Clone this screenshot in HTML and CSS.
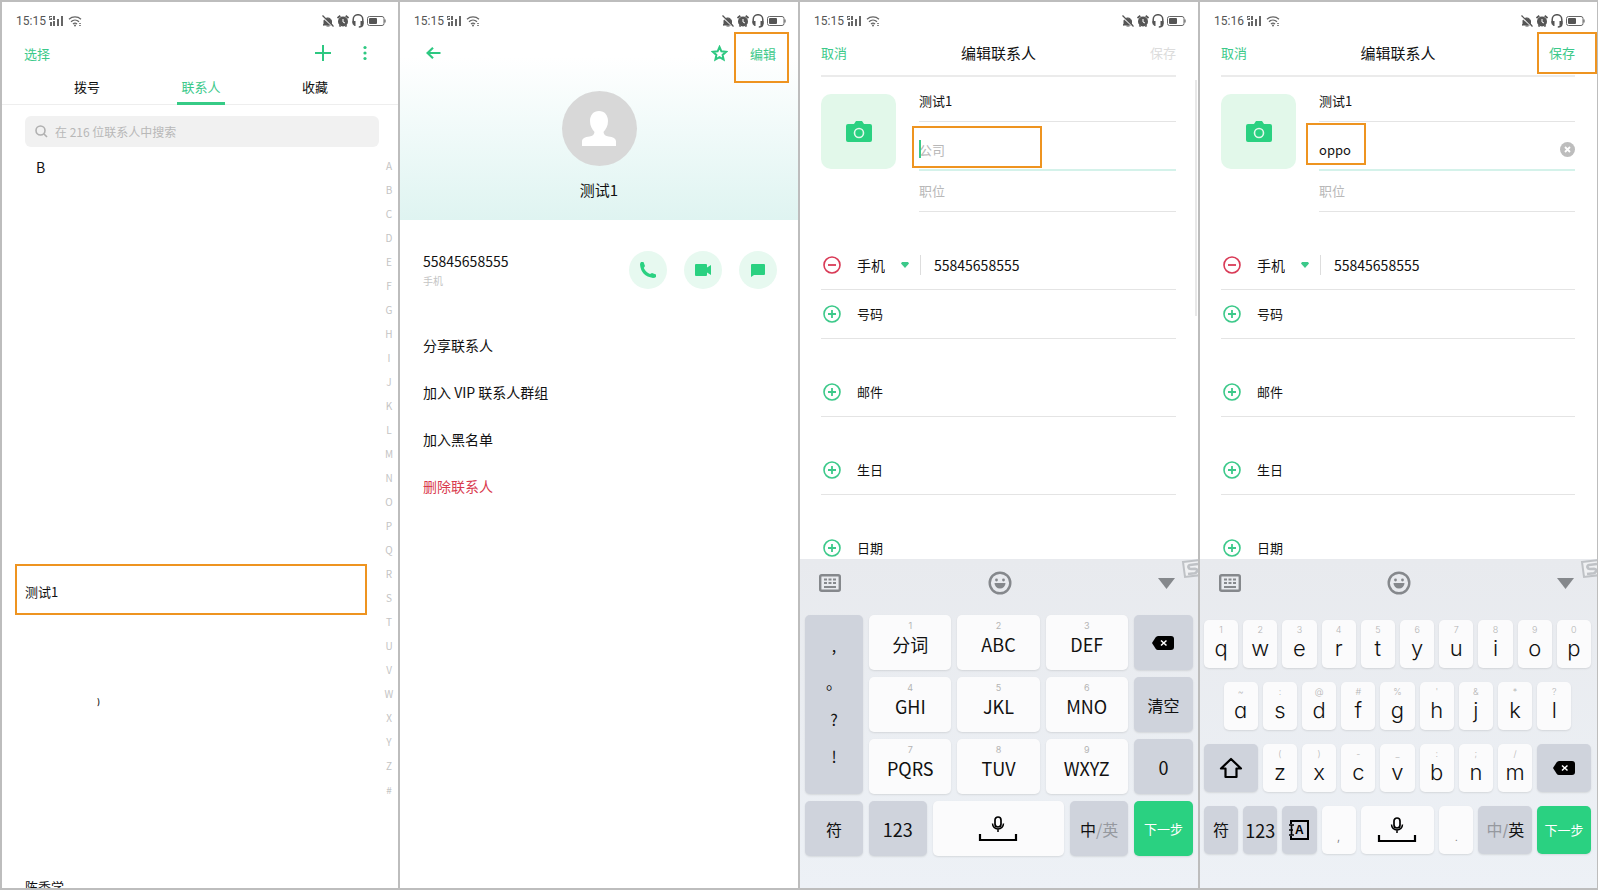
FILE: index.html
```html
<!DOCTYPE html>
<html lang="zh-CN">
  <head>
    <meta charset="UTF-8">
    <meta name="viewport" content="width=device-width, initial-scale=1.0">
    <title>编辑联系人</title>
    <link rel="stylesheet" href="styles.css">
  </head>
  <body>
    <!-- icons -->
    <svg class="sprite" aria-hidden="true">
      <symbol id="signal" viewBox="0 0 14 12">
        <path d="M0 1h3v1H1v1h2v2H0V4h2V3.500H0zM4 1h2v4H4zM1 7h2v4H1zM4 6h2v5H4zM8 4h2v7H8zM12 1h2v10h-2z" fill="#666"/>
      </symbol>
      <symbol id="wifi" viewBox="0 0 14 12">
        <path d="M1 4.200a9 9 0 0 1 12 0M3 6.700a6 6 0 0 1 8 0M5 9a3 3 0 0 1 4 0" fill="none" stroke="#666" stroke-width="1.300"/>
        <circle cx="7" cy="10.500" r="1" fill="#666"/><path d="M11 8h2v1h-2zM11 10h2v1h-2z" fill="#888"/>
      </symbol>
      <symbol id="bell" viewBox="0 0 12 12">
        <path d="M2 9.500V5.500a4 4 0 0 1 7.500 0v4l1 .500H1zM4.500 11h3" fill="#555" stroke="#555"/>
        <path d="M0 1.500l11 10" stroke="#fff" stroke-width="1.600"/><path d="M.500 .500l11 11" stroke="#555" stroke-width="1.200"/>
      </symbol>
      <symbol id="alarm" viewBox="0 0 12 12">
        <circle cx="6" cy="6.500" r="5" fill="#555"/>
        <path d="M.500 3l2.800-2.300M11.500 3L8.700.700M2.500 11.500l1-1.200M9.500 11.500l-1-1.200" stroke="#555" stroke-width="1.800"/>
        <path d="M6 4v3l2 1" fill="none" stroke="#fff" stroke-width="1"/>
      </symbol>
      <symbol id="headset" viewBox="0 0 12 14">
        <path d="M1.200 9V5.500a4.800 4.800 0 0 1 9.600 0v4.500q0 3-4 3" fill="none" stroke="#555" stroke-width="1.500"/>
        <path d="M.500 7h3v5H2.500L.500 10zM11.500 7h-3v5h1l2-2z" fill="#555"/>
      </symbol>
      <symbol id="battery" viewBox="0 0 19 10">
        <rect x=".500" y=".500" width="16.500" height="9" rx="2" fill="none" stroke="#666"/>
        <rect x="2" y="2" width="8" height="6" rx="1" fill="#555"/><path d="M18 3.500v3" stroke="#666" stroke-width="1.200"/>
      </symbol>
      <symbol id="camera" viewBox="0 0 26 22">
        <path d="M2 3h6l2-3h6l2 3h6q2 0 2 2v14q0 2-2 2H2q-2 0-2-2V5q0-2 2-2z" fill="#2ad181"/>
        <circle cx="13" cy="12" r="4.500" fill="none" stroke="#e2f8ea" stroke-width="1.600"/>
      </symbol>
      <symbol id="plus-circle" viewBox="0 0 18 18">
        <circle cx="9" cy="9" r="8" fill="none" stroke="#3cc98a" stroke-width="1.600"/>
        <path d="M5 9h8M9 5v8" stroke="#3cc98a" stroke-width="1.800"/>
      </symbol>
      <symbol id="minus-circle" viewBox="0 0 18 18">
        <circle cx="9" cy="9" r="8" fill="none" stroke="#d93a56" stroke-width="1.600"/>
        <path d="M5 9h8" stroke="#d93a56" stroke-width="1.800"/>
      </symbol>
      <symbol id="keyboard" viewBox="0 0 22 18">
        <rect x="1.200" y="1.200" width="19.600" height="15.600" rx="1.500" fill="none" stroke="#85888c" stroke-width="2.400"/>
        <path d="M5 4.500h3v2H5zM9.500 4.500h3v2h-3zM14 4.500h3v2h-3zM5 8h3v2H5zM9.500 8h3v2h-3zM14 8h3v2h-3zM5 12h12v2H5z" fill="#85888c"/>
      </symbol>
      <symbol id="smile" viewBox="0 0 24 24">
        <circle cx="12" cy="12" r="10.300" fill="none" stroke="#85888c" stroke-width="2.400"/>
        <circle cx="8.500" cy="9" r="1.400" fill="#85888c"/><circle cx="15.500" cy="9" r="1.400" fill="#85888c"/>
        <path d="M6.500 12h11a5.500 5.500 0 0 1-11 0z" fill="#85888c"/>
      </symbol>
      <symbol id="backspace" viewBox="0 0 22 14">
        <path d="M6 0h13q3 0 3 3v8q0 3-3 3H6q-1.500 0-2.500-1.500L0 7l3.500-5.500Q4.500 0 6 0z" fill="#000"/>
        <path d="M9 4.500l5.500 5M14.500 4.500l-5.500 5" stroke="#fff" stroke-width="1.500"/>
      </symbol>
      <symbol id="mic-space" viewBox="0 0 40 26">
        <rect x="17" y="1" width="6" height="10" rx="3" fill="none" stroke="#000" stroke-width="1.700"/>
        <path d="M14.500 7.500a5.500 5.500 0 0 0 11 0M20 13v3" fill="none" stroke="#000" stroke-width="1.500"/>
        <path d="M2 18v6h36v-6" fill="none" stroke="#000" stroke-width="2.200"/>
      </symbol>
      <symbol id="shift" viewBox="0 0 24 22">
        <path d="M12 2L2 11.500h4.500V20h11v-8.500H22z" fill="none" stroke="#000" stroke-width="2.200" stroke-linejoin="round"/>
      </symbol>
      <symbol id="sogou" viewBox="0 0 20 20">
        <path d="M2 3L20 1v15L4 18z" fill="#f0f1f3" stroke="#bfc2c6" stroke-width="2"/>
        <path d="M17 5L9 6q-2 .500-1.500 2.500Q8 10 10 10l4-.300q2.500.300 2 2.300-.300 2-2.500 2.300L7 15" fill="none" stroke="#bfc2c6" stroke-width="2.600"/>
      </symbol>
    </svg>

    <main class="phones">
      <!-- contact list -->
      <section class="phone">
        <div class="status">
          <span>15:15</span>
          <svg class="i-14"><use href="#signal"/></svg>
          <svg class="i-14"><use href="#wifi"/></svg>
          <svg class="i-12 push"><use href="#bell"/></svg>
          <svg class="i-12"><use href="#alarm"/></svg>
          <svg class="i-head"><use href="#headset"/></svg>
          <svg class="i-bat"><use href="#battery"/></svg>
        </div>
        <header class="bar">
          <button class="link">选择</button>
          <button class="icon-button push" aria-label="新建">
            <svg width="16" height="16" viewBox="0 0 16 16"><path d="M0 8h16M8 0v16" stroke="#2dc881" stroke-width="2"/></svg>
          </button>
          <button class="icon-button more" aria-label="更多">
            <svg width="4" height="16" viewBox="0 0 4 16" fill="#2dc881"><circle cx="2" cy="2.500" r="1.600"/><circle cx="2" cy="8" r="1.600"/><circle cx="2" cy="13.500" r="1.600"/></svg>
          </button>
        </header>
        <nav class="tabs">
          <a href="#dial">拨号</a>
          <a href="#contacts" class="active"><span>联系人</span></a>
          <a href="#favorites">收藏</a>
        </nav>
        <label class="search">
          <svg width="13" height="13" viewBox="0 0 13 13" fill="none" stroke="#b0b0b0" stroke-width="1.600"><circle cx="5.500" cy="5.500" r="4.500"/><path d="M9 9l3 3"/></svg>
          <input type="search" placeholder="在 216 位联系人中搜索" aria-label="搜索联系人">
        </label>
        <div class="contacts">
          <div class="contact-list">
            <h3>B</h3>
            <button class="contact marked">测试1</button>
            <p class="contact-rest">)</p>
            <p class="contact-last">陈秀学</p>
          </div>
          <ul class="index">
            <li>A</li><li>B</li><li>C</li><li>D</li><li>E</li><li>F</li><li>G</li><li>H</li><li>I</li>
            <li>J</li><li>K</li><li>L</li><li>M</li><li>N</li><li>O</li><li>P</li><li>Q</li><li>R</li>
            <li>S</li><li>T</li><li>U</li><li>V</li><li>W</li><li>X</li><li>Y</li><li>Z</li><li>#</li>
          </ul>
        </div>
      </section>

      <!-- contact details -->
      <section class="phone">
        <div class="profile">
          <div class="status">
            <span>15:15</span>
            <svg class="i-14"><use href="#signal"/></svg>
            <svg class="i-14"><use href="#wifi"/></svg>
            <svg class="i-12 push"><use href="#bell"/></svg>
            <svg class="i-12"><use href="#alarm"/></svg>
            <svg class="i-head"><use href="#headset"/></svg>
            <svg class="i-bat"><use href="#battery"/></svg>
          </div>
          <header class="bar">
            <button class="icon-button back" aria-label="返回">
              <svg width="15" height="12" viewBox="0 0 15 12" fill="none" stroke="#2dc881" stroke-width="2.200"><path d="M14.500 6H1.500M7 .800L1.500 6 7 11.200"/></svg>
            </button>
            <button class="icon-button push" aria-label="收藏">
              <svg width="17" height="17" viewBox="0 0 17 17" fill="none" stroke="#2dc881" stroke-width="2"><path d="M8.500 2l1.900 4.300 4.700.500-3.500 3.100 1 4.600-4.100-2.400-4.100 2.400 1-4.600L1.900 6.800l4.700-.500z"/></svg>
            </button>
            <button class="link edit">编辑</button>
            <span class="mark mark-edit"></span>
          </header>
          <div class="avatar">
            <svg width="34" height="36" viewBox="0 0 34 36" fill="#fff"><path d="M17 0c5.500 0 9 4 9 10 0 5-2 8-4.500 11 .500 3 2 4 5 4.500 4.500.500 7.500 2 7.500 5V35H0v-4.500c0-3 3-4.500 7.500-5 3-.500 4.500-1.500 5-4.500C10 18 8 15 8 10c0-6 3.500-10 9-10z"/></svg>
          </div>
          <h2>测试1</h2>
        </div>
        <div class="number">
          <div>
            <p class="digits">55845658555</p>
            <p class="kind">手机</p>
          </div>
          <button class="round push" aria-label="拨打">
            <svg width="16" height="16" viewBox="0 0 16 16" fill="#2ad181"><path d="M1 0h2.500L5 4 3.800 6Q6 10.500 10 12l2-1 4 1.500V15q-1 1-3 1Q1 14 0 2.500 0 1 1 0z"/></svg>
          </button>
          <button class="round" aria-label="视频通话">
            <svg width="16" height="12" viewBox="0 0 16 12" fill="#2ad181"><path d="M1 0h10q1 0 1 1v2.500L16 1v10l-4-2.500V11q0 1-1 1H1q-1 0-1-1V1q0-1 1-1z"/></svg>
          </button>
          <button class="round" aria-label="短信">
            <svg width="14" height="13" viewBox="0 0 14 13" fill="#2ad181"><path d="M1 0h12q1 0 1 1v9q0 1-1 1H3l-3 2V1q0-1 1-1z"/></svg>
          </button>
        </div>
        <div class="menu">
          <button>分享联系人</button>
          <button>加入 VIP 联系人群组</button>
          <button>加入黑名单</button>
          <button class="danger">删除联系人</button>
        </div>
      </section>

      <!-- edit contact, number pad -->
      <section class="phone">
        <div class="status">
          <span>15:15</span>
          <svg class="i-14"><use href="#signal"/></svg>
          <svg class="i-14"><use href="#wifi"/></svg>
          <svg class="i-12 push"><use href="#bell"/></svg>
          <svg class="i-12"><use href="#alarm"/></svg>
          <svg class="i-head"><use href="#headset"/></svg>
          <svg class="i-bat"><use href="#battery"/></svg>
        </div>
        <header class="bar edit-bar">
          <button class="link">取消</button>
          <h1>编辑联系人</h1>
          <button class="link" disabled>保存</button>
        </header>
        <form class="form">
          <div class="person">
            <button type="button" class="photo" aria-label="添加照片"><svg width="26" height="22"><use href="#camera"/></svg></button>
            <div class="fields">
              <div class="field"><input type="text" value="测试1" aria-label="姓名"></div>
              <div class="field focus">
                <span class="caret"></span>
                <input type="text" placeholder="公司" aria-label="公司">
                <span class="mark mark-company"></span>
              </div>
              <div class="field"><input type="text" placeholder="职位" aria-label="职位"></div>
            </div>
          </div>
          <div class="group">
            <div class="row">
              <svg class="i-18"><use href="#minus-circle"/></svg>
              <select aria-label="号码类型"><option>手机</option></select>
              <svg width="8" height="6" viewBox="0 0 8 6"><path d="M1 0h6l1 1.500L4 6 0 1.500z" fill="#3cc98a"/></svg>
              <input class="tel" type="tel" value="55845658555" aria-label="手机号码">
            </div>
            <button type="button" class="row"><svg class="i-18"><use href="#plus-circle"/></svg>号码</button>
          </div>
          <div class="group"><button type="button" class="row"><svg class="i-18"><use href="#plus-circle"/></svg>邮件</button></div>
          <div class="group"><button type="button" class="row"><svg class="i-18"><use href="#plus-circle"/></svg>生日</button></div>
          <div class="group"><button type="button" class="row"><svg class="i-18"><use href="#plus-circle"/></svg>日期</button></div>
          <span class="scrollbar"></span>
        </form>
        <div class="keyboard">
          <div class="tools">
            <svg width="22" height="18"><use href="#keyboard"/></svg>
            <svg width="24" height="24"><use href="#smile"/></svg>
            <svg width="17" height="11" viewBox="0 0 17 11"><path d="M0 0h17L8.500 11z" fill="#85888c"/></svg>
          </div>
          <svg class="sogou" width="20" height="20"><use href="#sogou"/></svg>
          <div class="t9">
            <div class="key grey punct"><span>,</span><span>。</span><span>?</span><span>!</span></div>
            <button class="key"><small>1</small>分词</button>
            <button class="key"><small>2</small>ABC</button>
            <button class="key"><small>3</small>DEF</button>
            <button class="key grey" aria-label="删除"><svg width="22" height="14"><use href="#backspace"/></svg></button>
            <button class="key"><small>4</small>GHI</button>
            <button class="key"><small>5</small>JKL</button>
            <button class="key"><small>6</small>MNO</button>
            <button class="key grey mid">清空</button>
            <button class="key"><small>7</small>PQRS</button>
            <button class="key"><small>8</small>TUV</button>
            <button class="key"><small>9</small>WXYZ</button>
            <button class="key grey">0</button>
          </div>
          <div class="t9-bottom">
            <button class="key grey mid">符</button>
            <button class="key grey">123</button>
            <button class="key" aria-label="空格"><svg width="40" height="26"><use href="#mic-space"/></svg></button>
            <button class="key grey mid"><span>中<span class="off">/英</span></span></button>
            <button class="key next">下一步</button>
          </div>
        </div>
      </section>

      <!-- edit contact, full keyboard -->
      <section class="phone">
        <div class="status">
          <span>15:16</span>
          <svg class="i-14"><use href="#signal"/></svg>
          <svg class="i-14"><use href="#wifi"/></svg>
          <svg class="i-12 push"><use href="#bell"/></svg>
          <svg class="i-12"><use href="#alarm"/></svg>
          <svg class="i-head"><use href="#headset"/></svg>
          <svg class="i-bat"><use href="#battery"/></svg>
        </div>
        <header class="bar edit-bar">
          <button class="link">取消</button>
          <h1>编辑联系人</h1>
          <button class="link">保存</button>
          <span class="mark mark-save"></span>
        </header>
        <form class="form">
          <div class="person">
            <button type="button" class="photo" aria-label="添加照片"><svg width="26" height="22"><use href="#camera"/></svg></button>
            <div class="fields">
              <div class="field"><input type="text" value="测试1" aria-label="姓名"></div>
              <div class="field focus">
                <input type="text" value="oppo" aria-label="公司">
                <button type="button" class="clear" aria-label="清除">
                  <svg width="15" height="15" viewBox="0 0 15 15"><circle cx="7.500" cy="7.500" r="7.500" fill="#bdbdbd"/><path d="M5 5l5 5M10 5l-5 5" stroke="#fff" stroke-width="1.800"/></svg>
                </button>
                <span class="mark mark-oppo"></span>
              </div>
              <div class="field"><input type="text" placeholder="职位" aria-label="职位"></div>
            </div>
          </div>
          <div class="group">
            <div class="row">
              <svg class="i-18"><use href="#minus-circle"/></svg>
              <select aria-label="号码类型"><option>手机</option></select>
              <svg width="8" height="6" viewBox="0 0 8 6"><path d="M1 0h6l1 1.500L4 6 0 1.500z" fill="#3cc98a"/></svg>
              <input class="tel" type="tel" value="55845658555" aria-label="手机号码">
            </div>
            <button type="button" class="row"><svg class="i-18"><use href="#plus-circle"/></svg>号码</button>
          </div>
          <div class="group"><button type="button" class="row"><svg class="i-18"><use href="#plus-circle"/></svg>邮件</button></div>
          <div class="group"><button type="button" class="row"><svg class="i-18"><use href="#plus-circle"/></svg>生日</button></div>
          <div class="group"><button type="button" class="row"><svg class="i-18"><use href="#plus-circle"/></svg>日期</button></div>
        </form>
        <div class="keyboard">
          <div class="tools">
            <svg width="22" height="18"><use href="#keyboard"/></svg>
            <svg width="24" height="24"><use href="#smile"/></svg>
            <svg width="17" height="11" viewBox="0 0 17 11"><path d="M0 0h17L8.500 11z" fill="#85888c"/></svg>
          </div>
          <svg class="sogou" width="20" height="20"><use href="#sogou"/></svg>
          <div class="qwerty">
            <button class="key"><small>1</small>q</button>
            <button class="key"><small>2</small>w</button>
            <button class="key"><small>3</small>e</button>
            <button class="key"><small>4</small>r</button>
            <button class="key"><small>5</small>t</button>
            <button class="key"><small>6</small>y</button>
            <button class="key"><small>7</small>u</button>
            <button class="key"><small>8</small>i</button>
            <button class="key"><small>9</small>o</button>
            <button class="key"><small>0</small>p</button>
            <button class="key indent"><small>~</small>a</button>
            <button class="key"><small>:</small>s</button>
            <button class="key"><small>@</small>d</button>
            <button class="key"><small>#</small>f</button>
            <button class="key"><small>%</small>g</button>
            <button class="key"><small>'</small>h</button>
            <button class="key"><small>&amp;</small>j</button>
            <button class="key"><small>*</small>k</button>
            <button class="key"><small>?</small>l</button>
            <button class="key grey w3 shift" aria-label="大写"><svg width="24" height="22"><use href="#shift"/></svg></button>
            <button class="key"><small>(</small>z</button>
            <button class="key"><small>)</small>x</button>
            <button class="key"><small>-</small>c</button>
            <button class="key"><small>_</small>v</button>
            <button class="key"><small>:</small>b</button>
            <button class="key"><small>;</small>n</button>
            <button class="key"><small>/</small>m</button>
            <button class="key grey w3" aria-label="删除"><svg width="22" height="14"><use href="#backspace"/></svg></button>
            <button class="key grey mid">符</button>
            <button class="key grey num">123</button>
            <button class="key grey" aria-label="全角"><svg width="20" height="20" viewBox="0 0 20 20"><path d="M2 4V1h17v18H2v-3" fill="none" stroke="#000" stroke-width="2"/><path d="M0 5h5M0 10h4M0 15h5M2.500 5v10" stroke="#000" stroke-width="1.600"/><text x="6" y="14" font-size="12" font-weight="bold" font-family="Liberation Sans, sans-serif">A</text></svg></button>
            <button class="key dot">,</button>
            <button class="key w4" aria-label="空格"><svg width="40" height="26"><use href="#mic-space"/></svg></button>
            <button class="key dot">.</button>
            <button class="key grey w3 mid"><span><span class="off">中/</span>英</span></button>
            <button class="key next w3">下一步</button>
          </div>
        </div>
      </section>
    </main>
  </body>
</html>
```

FILE: styles.css
```css
* {
  box-sizing: border-box;
  margin: 0;
  padding: 0;
}

body {
  font-family: "Noto Sans CJK SC", sans-serif;
  font-size: 13px;
  color: #111;
  background-color: #bdbdbd;
}

button,
input,
select {
  font: inherit;
  color: inherit;
  border: none;
  background: none;
  outline: none;
}

button {
  cursor: pointer;
}

svg {
  display: block;
  flex-shrink: 0;
}

.sprite {
  position: absolute;
  width: 0;
  height: 0;
}

.phones {
  display: grid;
  grid-template-columns: 396fr 398fr 398fr 397fr;
  gap: 2px;
  height: 100vh;
  padding: 2px 1px 2px 2px;
}

.phone {
  display: flex;
  flex-direction: column;
  min-width: 0;
  min-height: 0;
  overflow: hidden;
  background-color: #fff;
}

.push {
  margin-left: auto;
}

/* orange highlight */
.mark {
  position: absolute;
  border: 2px solid #ee9420;
  pointer-events: none;
}

/* status bar */
.status {
  display: flex;
  align-items: center;
  gap: 3px;
  height: 34px;
  padding: 4px 12px 0 14px;
  font-family: Roboto, sans-serif;
  font-size: 12px;
  color: #555;
  flex-shrink: 0;
}

.i-14 {
  width: 14px;
  height: 12px;
}

.i-14 + .i-14 {
  margin-left: 2px;
}

.i-12 {
  width: 12px;
  height: 12px;
}

.i-head {
  width: 12px;
  height: 14px;
}

.i-bat {
  width: 19px;
  height: 10px;
}

.i-18 {
  width: 18px;
  height: 18px;
}

/* title bar */
.bar {
  position: relative;
  display: flex;
  align-items: center;
  height: 36px;
  padding: 0 22px 2px;
  flex-shrink: 0;
}

.link {
  color: #3cc98a;
}

.link:disabled {
  color: #dcdcdc;
}

.more {
  margin: 0 9px 0 32px;
}

.back {
  margin-left: 4px;
}

.edit {
  margin-left: 22px;
}

.mark-edit {
  top: -4px;
  right: 9px;
  width: 55px;
  height: 51px;
}

.edit-bar {
  justify-content: space-between;
  height: 41px;
  margin: 0 22px 0 21px;
  padding: 0 0 6px;
  border-bottom: 2px solid #ebebeb;
}

.edit-bar h1 {
  font-size: 15px;
  font-weight: normal;
}

.mark-save {
  top: -4px;
  right: -22px;
  width: 60px;
  height: 42px;
}

/* contact list */
.tabs {
  display: flex;
  height: 33px;
  padding: 0 26px 0 28px;
  border-bottom: 1px solid #eee;
  flex-shrink: 0;
}

.tabs a {
  flex: 1;
  display: flex;
  justify-content: center;
  line-height: 30px;
  color: #111;
  text-decoration: none;
}

.tabs .active span {
  height: 33px;
  padding: 0 4px;
  color: #3cc98a;
  border-bottom: 3px solid #36cb86;
}

.search {
  display: flex;
  align-items: center;
  gap: 7px;
  height: 31px;
  margin: 11px 19px 0 23px;
  padding: 0 10px;
  border-radius: 6px;
  background-color: #f1f1f1;
  flex-shrink: 0;
}

.search input {
  flex: 1;
  min-width: 0;
  font-size: 12px;
}

input::placeholder {
  color: #b8b8b8;
  opacity: 1;
}

.contacts {
  flex: 1;
  display: flex;
  min-height: 0;
  padding-top: 7px;
}

.contact-list {
  flex: 1;
}

.contact-list h3 {
  padding-left: 34px;
  font-size: 14px;
  font-weight: normal;
  line-height: 26px;
}

.contact {
  display: block;
  width: calc(100% - 26px);
  height: 51px;
  margin: 384px 13px 0;
  padding: 4px 8px 0;
  text-align: left;
}

.marked {
  border: 2px solid #ee9420;
}

.contact-rest {
  margin-top: 77px;
  padding-left: 95px;
  font-size: 8px;
  font-weight: bold;
  line-height: 20px;
}

.contact-last {
  margin-top: 165px;
  padding-left: 23px;
  line-height: 20px;
}

.index {
  width: 18px;
  list-style: none;
  text-align: center;
  font-size: 10px;
  line-height: 24px;
  color: #c4c4c4;
}

/* contact details */
.profile {
  padding-bottom: 18px;
  background: linear-gradient(#fff 25%, #f0faf9 60%, #dff4f1);
}

.avatar {
  display: flex;
  align-items: center;
  justify-content: center;
  width: 75px;
  height: 75px;
  margin: 19px auto 12px;
  border-radius: 50%;
  background-color: #d8d8d8;
}

.profile h2 {
  font-size: 15px;
  font-weight: normal;
  line-height: 24px;
  text-align: center;
}

.number {
  display: flex;
  align-items: center;
  gap: 17px;
  margin: 30px 21px 31px 23px;
}

.digits {
  font-size: 14px;
  line-height: 22px;
}

.kind {
  font-size: 10px;
  line-height: 18px;
  color: #c4c4c4;
}

.round {
  display: flex;
  align-items: center;
  justify-content: center;
  width: 38px;
  height: 38px;
  border-radius: 50%;
  background-color: #e7f9f0;
}

.round.push {
  margin-left: auto;
}

.menu button {
  display: block;
  width: 100%;
  height: 47px;
  padding: 0 23px;
  font-size: 14px;
  text-align: left;
}

.menu .danger {
  color: #d93a4e;
}

/* edit form */
.form {
  position: relative;
  flex: 1;
  min-height: 0;
  padding: 4px 22px 0 21px;
  overflow: hidden;
}

.person {
  display: flex;
  gap: 23px;
}

.photo {
  display: flex;
  align-items: center;
  justify-content: center;
  width: 75px;
  height: 75px;
  margin-top: 13px;
  border-radius: 10px;
  background-color: #e2f8ea;
}

.fields {
  flex: 1;
  min-width: 0;
}

.field {
  position: relative;
  display: flex;
  align-items: center;
  height: 41px;
  padding-bottom: 2px;
  border-bottom: 1px solid #e4e4e4;
}

.field input {
  flex: 1;
  min-width: 0;
}

.focus {
  height: 49px;
  padding: 8px 0 0;
  border-bottom: 2px solid #d4f2ea;
}

.caret {
  position: absolute;
  top: 18px;
  left: 0;
  width: 2px;
  height: 18px;
  background-color: #3cc98a;
}

.mark-company {
  top: 4px;
  left: -7px;
  width: 130px;
  height: 42px;
}

.mark-oppo {
  top: 1px;
  left: -13px;
  width: 60px;
  height: 42px;
}

.group {
  margin-top: 29px;
}

.row {
  display: flex;
  align-items: center;
  gap: 16px;
  width: 100%;
  height: 49px;
  padding: 0 0 1px 2px;
  border-bottom: 1px solid #e4e4e4;
}

.row select {
  width: 28px;
  font-size: 14px;
  appearance: none;
}

.tel {
  flex: 1;
  min-width: 0;
  height: 20px;
  margin-left: -5px;
  padding-left: 13px;
  font-size: 14px;
  border-left: 1px solid #ddd;
}

.scrollbar {
  position: absolute;
  top: 3px;
  right: 1px;
  width: 2px;
  height: 236px;
  background-color: #e8e8e8;
}

/* keyboards */
.keyboard {
  position: relative;
  height: 329px;
  background: linear-gradient(#e8eaee, #edf1f6);
  flex-shrink: 0;
}

.tools {
  display: flex;
  align-items: center;
  justify-content: space-between;
  height: 48px;
  padding: 0 23px 0 19px;
}

.sogou {
  position: absolute;
  top: 0;
  right: -3px;
}

.key {
  display: flex;
  flex-direction: column;
  align-items: center;
  justify-content: center;
  min-width: 0;
  font-size: 18px;
  line-height: 26px;
  border-radius: 5px;
  background-color: #fbfbfc;
  box-shadow: 0 1px 2px rgba(0, 0, 0, 0.1);
}

.key small {
  font-family: Inter, sans-serif;
  font-size: 9px;
  line-height: 11px;
  color: #b4b4b4;
}

.grey {
  background-color: #cfd3dc;
}

.mid {
  font-size: 16px;
}

.next {
  font-size: 13px;
  color: #fff;
  background-color: #2ad181;
}

.off {
  color: #96999f;
}

.t9,
.t9-bottom {
  display: grid;
  gap: 7px 6px;
  padding: 0 5px;
}

.t9 {
  grid-template-columns: 58fr 82fr 82fr 82fr 59fr;
  grid-auto-rows: 55px;
  margin: 8px 0 7px;
}

.t9-bottom {
  grid-template-columns: 58fr 58fr 132fr 58fr 59fr;
  grid-auto-rows: 55px;
}

.t9 .key:has(small) {
  padding-bottom: 9px;
}

.punct {
  grid-row: span 3;
  gap: 13px;
  padding-bottom: 8px;
  font-size: 16px;
  line-height: 24px;
}

.qwerty {
  display: grid;
  grid-template-columns: repeat(20, 1fr);
  grid-auto-rows: 48px;
  gap: 14px 5px;
  margin-top: 13px;
  padding: 0 6px 0 4px;
}

.qwerty .key {
  grid-column: span 2;
  font-family: Inter, "Noto Sans CJK SC", sans-serif;
  font-size: 22px;
  font-weight: 300;
  font-feature-settings: "cv11";
}

.qwerty .key:has(small) {
  padding-bottom: 4px;
}

.qwerty .indent {
  grid-column: 2 / span 2;
}

.qwerty .w3 {
  grid-column: span 3;
}

.qwerty .shift {
  grid-column: 1 / span 3;
}

.qwerty .w4 {
  grid-column: span 4;
}

.qwerty .mid {
  font-size: 16px;
  font-weight: 400;
}

.qwerty .num {
  font-family: "Noto Sans CJK SC", sans-serif;
  font-size: 18px;
  font-weight: 400;
}

.qwerty .next {
  font-size: 13px;
  font-weight: 400;
}

.qwerty .dot {
  padding-top: 12px;
  font-size: 13px;
  color: #777;
}
```
